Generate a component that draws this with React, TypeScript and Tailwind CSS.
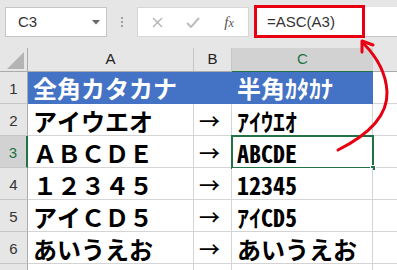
import React from "react";

const rows = [
  { n: "1", a: "全角カタカナ", b: "", c: "半角ｶﾀｶﾅ", head: true },
  { n: "2", a: "アイウエオ", b: "→", c: "ｱｲｳｴｵ" },
  { n: "3", a: "ＡＢＣＤＥ", b: "→", c: "ABCDE", sel: true },
  { n: "4", a: "１２３４５", b: "→", c: "12345" },
  { n: "5", a: "アイＣＤ５", b: "→", c: "ｱｲCD5" },
  { n: "6", a: "あいうえお", b: "→", c: "あいうえお" },
  { n: "", a: "", b: "", c: "" },
];

const cellFont =
  "font-['Noto_Sans_Mono_CJK_JP','Noto_Sans_CJK_JP',sans-serif] text-[24px] leading-none";

export default function App() {
  return (
    <div className="relative w-[397px] h-[270px] overflow-hidden bg-[#e6e6e6] font-['Liberation_Sans',sans-serif]">
      {/* toolbar */}
      <div className="h-[48px] flex items-start pt-[7px]">
        <div className="ml-[5px] w-[102px] h-[30px] bg-white border border-[#c6c6c6] flex items-center justify-between pl-[12px] pr-[6px]">
          <span className="text-[15px] text-[#333]">C3</span>
          <svg width="8" height="5" viewBox="0 0 8 5">
            <polygon points="0,0 8,0 4,4.5" fill="#666" />
          </svg>
        </div>
        <div className="w-[30px] h-[30px] flex flex-col items-center justify-center gap-[2px]">
          <span className="w-[2px] h-[2px] bg-[#a0a0a0]" />
          <span className="w-[2px] h-[2px] bg-[#a0a0a0]" />
          <span className="w-[2px] h-[2px] bg-[#a0a0a0]" />
        </div>
        <div className="w-[112px] h-[30px] bg-white border border-[#d6d6d6] flex items-center">
          <div className="w-[36px] flex justify-center pl-[2px]">
            <svg width="11" height="11" viewBox="0 0 11 11">
              <path d="M1 1 L10 10 M10 1 L1 10" stroke="#b3b3b3" strokeWidth="1.4" />
            </svg>
          </div>
          <div className="w-[38px] flex justify-center">
            <svg width="14" height="11" viewBox="0 0 14 11">
              <path d="M1 6 L5 10 L13 1" stroke="#bdbdbd" strokeWidth="2" fill="none" />
            </svg>
          </div>
          <div className="flex-1 flex justify-center pr-[2px]">
            <span className="font-['Liberation_Serif',serif] italic text-[15px] text-[#555] leading-none">
              f<span className="text-[12px]">x</span>
            </span>
          </div>
        </div>
        <div className="ml-[5px] flex-1 h-[30px] bg-white border-b border-[#c6c6c6] flex">
          <div className="-mt-[2px] w-[111px] h-[33px] border-[3px] border-[#e60012] flex items-center pl-[10px]">
            <span className="text-[15px] text-[#333] pt-[1px]">=ASC(A3)</span>
          </div>
        </div>
      </div>

      {/* column header row */}
      <div className="h-[24px] flex border-b border-[#ababab]">
        <div className="w-[28px] h-full border-r border-[#ababab] flex items-end justify-end pr-[3px] pb-[2px]">
          <svg width="17" height="17" viewBox="0 0 17 17">
            <polygon points="17,0 17,17 0,17" fill="#b4b4b4" />
          </svg>
        </div>
        <div className="w-[166px] h-full border-r border-[#c6c6c6] flex items-center justify-center text-[15px] text-[#222]">
          A
        </div>
        <div className="w-[38px] h-full border-r border-[#c6c6c6] flex items-center justify-center text-[15px] text-[#222]">
          B
        </div>
        <div className="w-[141px] h-[25px] bg-[#d2d2d2] border-b-2 border-[#217346] flex items-center justify-center text-[15px] text-[#217346]">
          C
        </div>
        <div className="flex-1 h-full" />
      </div>

      {/* rows */}
      {rows.map((r, i) => (
        <div key={i} className="h-[32px] flex">
          <div
            className={
              "w-[28px] h-full flex items-center justify-center text-[15px] border-b border-[#c6c6c6] " +
              (r.sel
                ? "bg-[#d2d2d2] text-[#217346] border-r-2 border-r-[#217346]"
                : "text-[#333] border-r border-r-[#ababab]")
            }
          >
            <span className="pt-[4px]">{r.n}</span>
          </div>
          {r.head ? (
            <div className="w-[345px] h-full bg-[#4472c4] flex text-white font-bold">
              <div className={"w-[166px] h-full flex items-center pl-[5px] " + cellFont}>{r.a}</div>
              <div className="w-[38px] h-full" />
              <div className={"w-[141px] h-full flex items-center pl-[5px] " + cellFont}>{r.c}</div>
            </div>
          ) : (
            <>
              <div
                className={
                  "w-[166px] h-full bg-white border-r border-b border-[#d4d4d4] flex items-center pl-[5px] pt-[2px] font-bold text-black " +
                  cellFont
                }
              >
                {r.a}
              </div>
              <div className="w-[38px] h-full bg-white border-r border-b border-[#d4d4d4] flex items-center pl-[5px] pt-[2px] text-black font-['Noto_Sans_CJK_JP',sans-serif] text-[21px] font-medium leading-none">
                {r.b}
              </div>
              <div
                className={
                  "relative w-[141px] h-full bg-white border-r border-b border-[#d4d4d4] flex items-center pl-[5px] pt-[2px] font-bold text-black " +
                  cellFont
                }
              >
                {r.c}
                {r.sel && (
                  <>
                    <div className="absolute -left-[1px] -top-[1px] w-[143px] h-[34px] border-2 border-[#217346]" />
                    <div className="absolute -right-[4px] -bottom-[4px] w-[6px] h-[6px] bg-[#217346] border border-white" />
                  </>
                )}
              </div>
            </>
          )}
          <div className="flex-1 h-full bg-white border-b border-[#d4d4d4]" />
        </div>
      ))}

      {/* red curved arrow overlay */}
      <svg
        className="absolute left-0 top-0 pointer-events-none"
        width="397"
        height="270"
        viewBox="0 0 397 270"
      >
        <path
          d="M338 150 C360 139 388 120 387 92 C386 70 374 54 363 43"
          stroke="#e60012"
          strokeWidth="3"
          fill="none"
          strokeLinecap="round"
        />
        <polyline
          points="362,52 362,41 373,45"
          stroke="#e60012"
          strokeWidth="3"
          fill="none"
          strokeLinecap="round"
          strokeLinejoin="round"
        />
      </svg>
    </div>
  );
}
